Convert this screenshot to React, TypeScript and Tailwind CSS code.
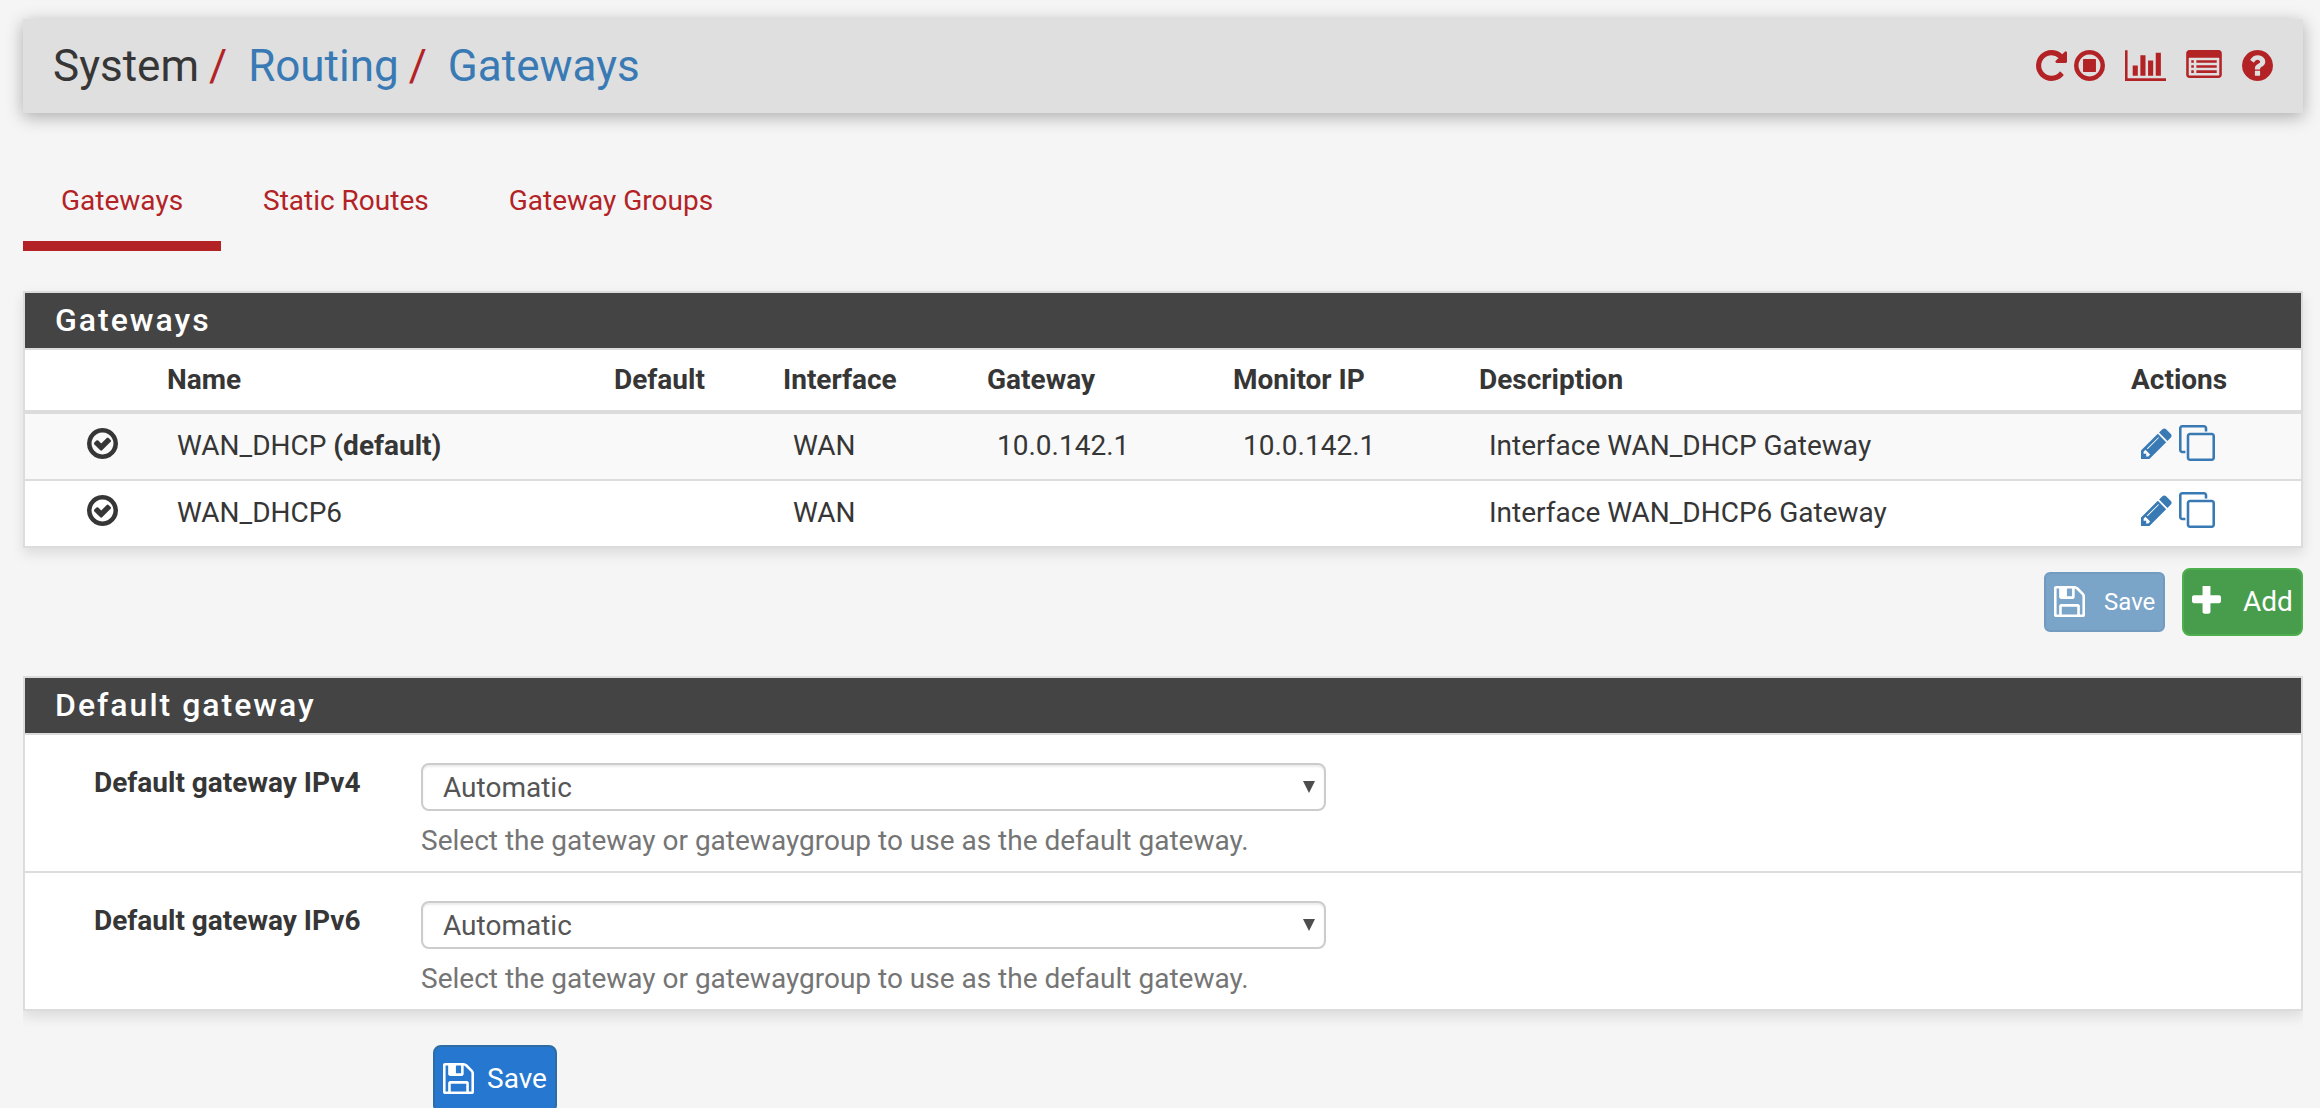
import type { ReactNode } from "react";

type IconProps = { d: string; box: string; className: string };

function Icon({ d, box, className }: IconProps) {
  return (
    <svg viewBox={box} className={`block shrink-0 fill-current ${className}`} aria-hidden="true">
      <path fillRule="evenodd" d={d} />
    </svg>
  );
}

const SQUARE = "128 128 1536 1536";

const REPEAT =
  "M1664 256v448q0 26-19 45t-45 19h-448q-42 0-59-40-17-39 14-69l138-138q-148-137-349-137-104 0-198.5 40.5t-163.5 109.5-109.5 163.5-40.5 198.5 40.5 198.5 109.5 163.5 163.5 109.5 198.5 40.5q119 0 225-52t179-147q7-10 23-12 15 0 25 9l137 138q9 8 9.5 20.5t-7.5 22.5q-109 132-264 204.5t-327 72.5q-156 0-298-61t-245-164-164-245-61-298 61-298 164-245 245-164 298-61q147 0 284.5 55.5t244.5 156.5l130-129q29-31 70-14 39 17 39 59z";
const RING =
  "M896 352q-148 0-273 73t-198 198-73 273 73 273 198 198 273 73 273-73 198-198 73-273-73-273-198-198-273-73zm768 544q0 209-103 385.5t-279.5 279.5-385.5 103-385.5-103-279.5-279.5-103-385.5 103-385.5 279.5-279.5 385.5-103 385.5 103 279.5 279.5 103 385.5z";
const STOP = RING + "M608 576h576q14 0 23 9t9 23v576q0 14-9 23t-23 9h-576q-14 0-23-9t-9-23v-576q0-14 9-23t23-9z";
const CHECK =
  RING +
  "M1299 813l-422 422q-19 19-45 19t-45-19l-294-294q-19-19-19-45t19-45l102-102q19-19 45-19t45 19l147 147 275-275q19-19 45-19t45 19l102 102q19 19 19 45t-19 45z";
const CHART =
  "M640 896v512h-256v-512h256zm384-512v1024h-256v-1024h256zm1024 1152v128h-2048v-1536h128v1408h1920zm-640-896v768h-256v-768h256zm384-384v1152h-256v-1152h256z";
const LIST =
  "M160 128h1472q66 0 113 47t47 113v1088q0 66-47 113t-113 47h-1472q-66 0-113-47t-47-113v-1088q0-66 47-113t113-47zM128 544v832q0 13 9.500 22.500t22.500 9.500h1472q13 0 22.500-9.500t9.500-22.500v-832q0-13-9.500-22.500t-22.500-9.500h-1472q-13 0-22.500 9.500t-9.500 22.500zM256 640h128v128h-128zM256 896h128v128h-128zM256 1152h128v128h-128zM512 640h1024v128h-1024zM512 896h1024v128h-1024zM512 1152h1024v128h-1024z";
const QUESTION =
  "M1024 1376v-192q0-14-9-23t-23-9h-192q-14 0-23 9t-9 23v192q0 14 9 23t23 9h192q14 0 23-9t9-23zm256-672q0-88-55.5-163t-138.5-116-170-41q-243 0-371 213-15 24 8 42l132 100q7 6 19 6 16 0 25-12 53-68 86-92 34-24 86-24 48 0 85.5 26t37.5 59q0 38-20 61t-68 45q-63 28-115.5 86.5t-52.5 125.5v36q0 14 9 23t23 9h192q14 0 23-9t9-23q0-19 21.5-49.5t54.5-49.5q32-18 49-28.5t46-35 44.5-48 28-60.5 12.5-81zm384 192q0 209-103 385.5t-279.5 279.5-385.5 103-385.5-103-279.5-279.5-103-385.5 103-385.5 279.5-279.5 385.5-103 385.5 103 279.5 279.5 103 385.5z";
const PENCIL =
  "M491 1536l91-91-235-235-91 91v107h128v128h107zm523-928q0-22-22-22-10 0-17 7l-542 542q-7 7-7 17 0 22 22 22 10 0 17-7l542-542q7-7 7-17zm-54-192l416 416-832 832h-416v-416zm683 96q0 53-37 90l-166 166-416-416 166-165q36-38 90-38 53 0 91 38l235 234q37 39 37 91z";
const CLONE =
  "M1664 1632v-1088q0-13-9.5-22.5t-22.5-9.5h-1088q-13 0-22.5 9.5t-9.5 22.5v1088q0 13 9.5 22.5t22.5 9.5h1088q13 0 22.5-9.5t9.5-22.5zm128-1088v1088q0 66-47 113t-113 47h-1088q-66 0-113-47t-47-113v-1088q0-66 47-113t113-47h1088q66 0 113 47t47 113zm-384-384v160h-128v-160q0-13-9.5-22.5t-22.5-9.5h-1088q-13 0-22.5 9.5t-9.5 22.5v1088q0 13 9.5 22.5t22.5 9.5h160v128h-160q-66 0-113-47t-47-113v-1088q0-66 47-113t113-47h1088q66 0 113 47t47 113z";
const FLOPPY =
  "M512 1536h768v-384h-768v384zm896 0h128v-896q0-14-10-38.5t-20-34.5l-281-281q-10-10-34-20t-39-10v416q0 40-28 68t-68 28h-576q-40 0-68-28t-28-68v-416h-128v1280h128v-416q0-40 28-68t68-28h832q40 0 68 28t28 68v416zm-384-928v-320q0-13-9.5-22.5t-22.5-9.5h-192q-13 0-22.5 9.5t-9.5 22.5v320q0 13 9.5 22.5t22.5 9.5h192q13 0 22.5-9.5t9.5-22.5zm640 32v928q0 40-28 68t-68 28h-1344q-40 0-68-28t-28-68v-1344q0-40 28-68t68-28h928q40 0 88 20t76 48l280 280q28 28 48 76t20 88z";
const PLUS =
  "M1600 736v192q0 40-28 68t-68 28h-416v416q0 40-28 68t-68 28h-192q-40 0-68-28t-28-68v-416h-416q-40 0-68-28t-28-68v-192q0-40 28-68t68-28h416v-416q0-40 28-68t68-28h192q40 0 68 28t28 68v416h416q40 0 68 28t28 68z";

const COLS = "grid grid-cols-[142px_447px_169px_204px_246px_246px_652px_1fr]";

function Panel({ title, className = "", children }: { title: string; className?: string; children: ReactNode }) {
  return (
    <section className={`border-2 border-[#dcdcdc] bg-white shadow-[0_6px_12px_rgba(0,0,0,0.1)] ${className}`}>
      <h2 className="h-[57px] border-b-2 border-[#dcdcdc] bg-[#444444] pl-[30px] text-[32px] leading-[54px] font-medium tracking-[2px] text-white">
        {title}
      </h2>
      {children}
    </section>
  );
}

type Gateway = { name: string; isDefault?: boolean; iface: string; ip: string; descr: string };

const gateways: Gateway[] = [
  { name: "WAN_DHCP", isDefault: true, iface: "WAN", ip: "10.0.142.1", descr: "Interface WAN_DHCP Gateway" },
  { name: "WAN_DHCP6", iface: "WAN", ip: "", descr: "Interface WAN_DHCP6 Gateway" },
];

function GatewayRow({ gw }: { gw: Gateway }) {
  return (
    <div className={`${COLS} h-[67px] border-b-2 border-[#dcdcdc] leading-[63px] odd:bg-[#f9f9f9] last:h-[65px] last:border-b-0`}>
      <span className="pt-[14px] pl-[62px]">
        <Icon d={CHECK} box={SQUARE} className="size-[31px]" />
      </span>
      <span className="pl-[10px]">
        {gw.name} {gw.isDefault && <b className="font-bold">(default)</b>}
      </span>
      <span />
      <span className="pl-[10px]">{gw.iface}</span>
      <span className="pl-[10px]">{gw.ip}</span>
      <span className="pl-[10px]">{gw.ip}</span>
      <span className="pl-[10px]">{gw.descr}</span>
      <span className="flex gap-[7px] pt-[11px] pl-[10px] text-[#397ab5]">
        <Icon d={PENCIL} box={SQUARE} className="mt-[3px] size-[31px]" />
        <Icon d={CLONE} box="0 0 1792 1792" className="size-[36px]" />
      </span>
    </div>
  );
}

function SelectRow({ label }: { label: string }) {
  return (
    <div className="flex h-[138px] border-b-2 border-[#dcdcdc] pt-[28px] last:h-[136px] last:border-b-0">
      <label className="w-[396px] pl-[69px] leading-[39px] font-bold">{label}</label>
      <div>
        <div className="flex h-[48px] w-[905px] items-center justify-between rounded-[8px] border-2 border-[#ccc] bg-white pr-[9px] pl-[20px] text-[#555] shadow-[inset_0_2px_2px_rgba(0,0,0,0.075)]">
          <span className="pt-[2px] leading-[44px]">Automatic</span>
          <svg viewBox="0 0 12 12" className="size-[12px] fill-[#4d4d4d]" aria-hidden="true">
            <path d="M0 0h12L6 12z" />
          </svg>
        </div>
        <p className="mt-[10px] leading-[40px] text-[#757575]">Select the gateway or gatewaygroup to use as the default gateway.</p>
      </div>
    </div>
  );
}

export default function App() {
  return (
    <div className="h-[1108px] w-[2320px] overflow-hidden bg-[#f5f5f5] pt-[19px] pr-[17px] pl-[23px] font-[Roboto,sans-serif] text-[28px] text-[#363636]">
      <header className="flex h-[94px] justify-between bg-[#dfdfdf] pr-[30px] pl-[30px] shadow-[0_4px_16px_rgba(0,0,0,0.3)]">
        <h1 className="flex text-[44px] leading-[94px]">
          <span>System</span>
          <span className="ml-[10px] text-[#b32326]">/</span>
          <a className="ml-[21px] text-[#397ab5]">Routing</a>
          <span className="ml-[10px] text-[#b32326]">/</span>
          <a className="ml-[21px] text-[#397ab5]">Gateways</a>
        </h1>
        <div className="flex pt-[31px] text-[#b32326]">
          <Icon d={REPEAT} box={SQUARE} className="size-[31px]" />
          <Icon d={STOP} box={SQUARE} className="ml-[7px] size-[31px]" />
          <Icon d={CHART} box="0 128 2048 1536" className="ml-[20px] h-[31px] w-[41px]" />
          <Icon d={LIST} box="0 128 1792 1408" className="ml-[20px] h-[28px] w-[36px]" />
          <Icon d={QUESTION} box={SQUARE} className="ml-[20px] size-[31px]" />
        </div>
      </header>

      <nav className="mt-[59px] flex h-[79px] gap-[4px] text-[#b32326]">
        <a className="w-[198px] border-b-[10px] border-[#b32326] pl-[38px] leading-[57px]">Gateways</a>
        <a className="px-[38px] leading-[57px]">Static Routes</a>
        <a className="px-[38px] leading-[57px]">Gateway Groups</a>
      </nav>

      <Panel title="Gateways" className="mt-[40px]">
        <div className={`${COLS} h-[64px] border-b-4 border-[#dcdcdc] leading-[59px] font-bold`}>
          <span />
          <span>Name</span>
          <span>Default</span>
          <span>Interface</span>
          <span>Gateway</span>
          <span>Monitor IP</span>
          <span>Description</span>
          <span>Actions</span>
        </div>
        <div>
          {gateways.map((gw) => (
            <GatewayRow key={gw.name} gw={gw} />
          ))}
        </div>
      </Panel>

      <div className="mt-[20px] flex h-[68px] items-center justify-end gap-[17px] text-white">
        <button className="flex h-[60px] w-[121px] rounded-[6px] border-2 border-[#739bc0] bg-[#7ba4c9] pt-[12px] pl-[8px] text-[24px]">
          <Icon d={FLOPPY} box={SQUARE} className="size-[31px]" />
          <span className="ml-[19px] leading-[32px]">Save</span>
        </button>
        <button className="flex h-[68px] w-[121px] rounded-[8px] border-2 border-[#4cae4c] bg-[#479d4b] pt-[16px] pl-[8px]">
          <Icon d={PLUS} box="192 192 1408 1408" className="size-[29px]" />
          <span className="ml-[22px] leading-[31px]">Add</span>
        </button>
      </div>

      <div className="mt-[40px] overflow-hidden pb-[34px]">
        <Panel title="Default gateway">
          <div>
            <SelectRow label="Default gateway IPv4" />
            <SelectRow label="Default gateway IPv6" />
          </div>
        </Panel>
      </div>

      <button className="ml-[410px] flex h-[68px] w-[124px] rounded-[8px] border-2 border-[#2e6da4] bg-[#2577cf] pt-[16px] pl-[8px] text-white">
        <Icon d={FLOPPY} box={SQUARE} className="size-[31px]" />
        <span className="ml-[13px] leading-[32px]">Save</span>
      </button>
    </div>
  );
}
